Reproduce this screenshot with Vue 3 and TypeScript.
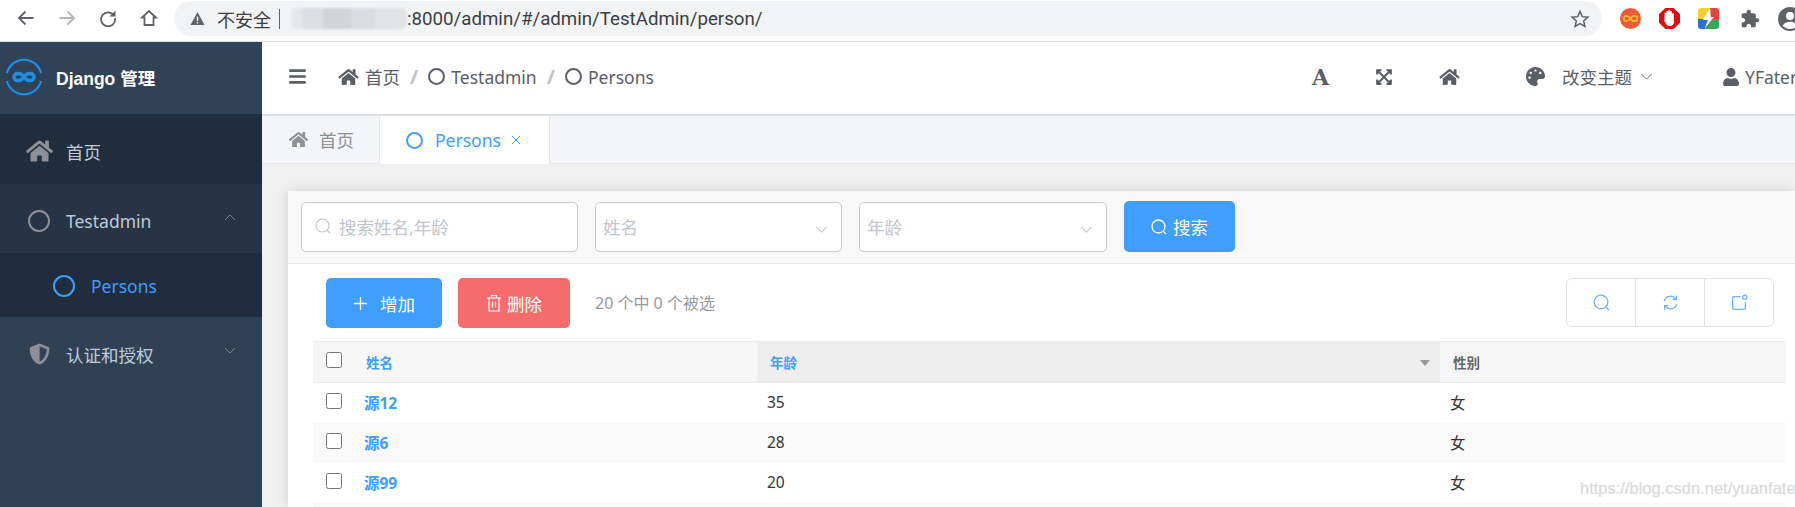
<template>
  <div class="window">
    <!-- browser toolbar -->
    <div class="chrome">
      <svg class="nav-ic" style="margin-left: 17px" viewBox="0 0 18 18"><path d="M16.5 9H2M8.5 2.5L2 9l6.5 6.5" /></svg>
      <svg class="nav-ic dim" viewBox="0 0 18 18"><path d="M1.5 9H16M9.5 2.5L16 9l-6.5 6.5" /></svg>
      <svg class="nav-ic" viewBox="0 0 18 18"><path d="M15 6.5A7 7 0 1 0 16 9" /><path class="solid" d="M16.5 1.5v6h-6z" /></svg>
      <svg class="nav-ic" viewBox="0 0 18 18"><path d="M9 2L2 8.5h2.500V16h9V8.500H16z" /></svg>
      <div class="omnibox">
        <svg class="warn" viewBox="0 0 16 16"><path d="M8 1l7.500 14H.5z" /><rect x="7.200" y="6" width="1.600" height="4.600" fill="#f1f3f4" /><rect x="7.200" y="11.600" width="1.600" height="1.600" fill="#f1f3f4" /></svg>
        <span class="insecure">不安全</span>
        <i class="omni-sep"></i>
        <i class="blurred"></i>
        <span class="url">:8000/admin/#/admin/TestAdmin/person/</span>
        <svg class="star" viewBox="0 0 24 24"><path d="M12 3l2.700 6.200 6.800.6-5.100 4.500 1.500 6.600L12 17.400l-5.900 3.500 1.500-6.600-5.100-4.500 6.800-.6z" /></svg>
      </div>
      <div class="extensions">
        <svg class="ext" viewBox="0 0 20 20"><circle cx="10" cy="10" r="10" fill="#ee5a3a" /><path d="M10 10C8 6.500 3.500 7 3.500 10s4.500 3.500 6.500 0 6.500-3.500 6.500 0-4.500 3.500-6.500 0z" fill="none" stroke="#f9c02c" stroke-width="1.500" /></svg>
        <svg class="ext" viewBox="0 0 20 20"><path d="M6 0h8l6 6v8l-6 6H6l-6-6V6z" fill="#e40b10" /><path d="M5.200 10V5.200a.9.9 0 0 1 1.800 0V3.400a.9.9 0 0 1 1.800 0V2.800a.9.9 0 0 1 1.800 0v.6a.9.9 0 0 1 1.800 0V6a.9.9 0 0 1 1.800 0v7.500c0 2.200-1.600 3.700-3.800 3.700-2.600 0-3.800-1.700-5.800-5.800.6-.9 1.500-.8 1.800-.2z" fill="#fff" /></svg>
        <svg class="ext" viewBox="0 0 21 21">
          <path d="M3 0h9L5 11H0V3a3 3 0 0 1 3-3z" fill="#f7cf2a" />
          <path d="M12 0h6a3 3 0 0 1 3 3v8H13z" fill="#e2453c" />
          <path d="M0 11h10l-3 10H3a3 3 0 0 1-3-3z" fill="#2a70d6" />
          <path d="M10 11h11v7a3 3 0 0 1-3 3H7z" fill="#3aa757" />
          <path d="M13 1L5 12h5l-3 8 9-11h-5z" fill="#fff" />
        </svg>
        <svg class="puzzle" viewBox="0 0 24 24"><path d="M20.500 11H19V7c0-1.100-.9-2-2-2h-4V3.500C13 2.120 11.880 1 10.500 1S8 2.120 8 3.500V5H4c-1.100 0-1.990.9-1.990 2v3.800H3.500c1.490 0 2.700 1.210 2.700 2.700s-1.210 2.700-2.700 2.700H2V20c0 1.100.9 2 2 2h3.800v-1.500c0-1.490 1.210-2.700 2.700-2.700 1.490 0 2.700 1.210 2.700 2.700V22H17c1.100 0 2-.9 2-2v-4h1.500c1.380 0 2.500-1.120 2.500-2.500S21.880 11 20.500 11z" /></svg>
        <svg class="avatar" viewBox="0 0 24 24"><circle cx="12" cy="12" r="12" fill="#5f6368" /><circle cx="12" cy="9" r="4" fill="#fff" /><path d="M4.500 18.500c2-3 5-3.800 7.500-3.800s5.500.8 7.500 3.800A10 10 0 0 1 12 22a10 10 0 0 1-7.500-3.500z" fill="#fff" /></svg>
      </div>
    </div>

    <div class="main">
      <aside class="sidebar">
        <div class="brand">
          <svg class="logo" viewBox="0 0 38 38">
            <path d="M2 15A17.500 17.500 0 0 1 36 15M36 23A17.500 17.500 0 0 1 2 23" fill="none" stroke="#1f8fe6" stroke-width="2" />
            <path d="M19 19c-2.500-4.500-10-5-10 0s7.500 4.500 10 0 10-5 10 0-7.500 4.500-10 0z" fill="none" stroke="#1f8fe6" stroke-width="3.500" />
          </svg>
          <span class="brand-name">Django 管理</span>
        </div>
        <div class="menu-item home">
          <svg class="fa menu-home" viewBox="0 0 576 512"><path :d="ICON_HOME" /></svg>
          <span>首页</span>
        </div>
        <div class="menu-item open">
          <i class="ring menu-ring"></i>
          <span>Testadmin</span>
          <svg class="caret" viewBox="0 0 12 7"><path d="M1 6l5-5 5 5" /></svg>
        </div>
        <div class="menu-item sub">
          <i class="ring sub-ring"></i>
          <span>Persons</span>
        </div>
        <div class="menu-item auth">
          <svg class="fa menu-shield" viewBox="0 0 512 512"><path :d="ICON_SHIELD" /><path d="M256 65v381C160 400 82 290 80 139z" opacity=".55" /></svg>
          <span>认证和授权</span>
          <svg class="caret" viewBox="0 0 12 7"><path d="M1 1l5 5 5-5" /></svg>
        </div>
      </aside>

      <div class="right">
        <header class="navbar">
          <svg class="fa bars" viewBox="0 0 448 512"><path :d="ICON_BARS" /></svg>
          <svg class="fa crumb-home" viewBox="0 0 576 512"><path :d="ICON_HOME" /></svg>
          <span class="crumb">首页</span>
          <span class="slash">/</span>
          <i class="ring crumb-ring"></i>
          <span class="crumb">Testadmin</span>
          <span class="slash">/</span>
          <i class="ring crumb-ring"></i>
          <span class="crumb">Persons</span>

          <div class="nav-tools">
            <span class="font-a">A</span>
            <svg class="fa tool-expand" viewBox="0 0 448 512"><path :d="ICON_EXPAND" /></svg>
            <svg class="fa tool-home" viewBox="0 0 576 512"><path :d="ICON_HOME" /></svg>
            <svg class="fa tool-palette" viewBox="0 0 512 512"><path :d="ICON_PALETTE" /></svg>
            <span class="theme">改变主题</span>
            <svg class="theme-caret" viewBox="0 0 14 8"><path d="M1 1l6 6 6-6" /></svg>
            <svg class="fa tool-user" viewBox="0 0 448 512"><path :d="ICON_USER" /></svg>
            <span class="user">YFater</span>
          </div>
        </header>

        <div class="tabs">
          <div class="tab">
            <svg class="fa tab-home" viewBox="0 0 576 512"><path :d="ICON_HOME" /></svg>
            <span>首页</span>
          </div>
          <div class="tab active">
            <i class="ring tab-ring"></i>
            <span>Persons</span>
            <svg class="tab-x" viewBox="0 0 10 10"><path d="M1 1l8 8M9 1l-8 8" /></svg>
          </div>
        </div>

        <div class="content">
          <section class="card">
            <div class="filters">
              <div class="field search">
                <svg class="search-ic" viewBox="0 0 16 16"><circle cx="7.500" cy="7.500" r="6.500" /><path d="M12 12l3 3" /></svg>
                <span>搜索姓名,年龄</span>
              </div>
              <div class="field select first">
                <span>姓名</span>
                <svg class="select-caret" viewBox="0 0 14 8"><path d="M1 1l6 6 6-6" /></svg>
              </div>
              <div class="field select second">
                <span>年龄</span>
                <svg class="select-caret" viewBox="0 0 14 8"><path d="M1 1l6 6 6-6" /></svg>
              </div>
              <button class="btn search-btn">
                <svg class="btn-search-ic" viewBox="0 0 16 16"><circle cx="7.500" cy="7.500" r="6.500" /><path d="M12 12l3 3" /></svg>
                搜索
              </button>
            </div>

            <div class="actions">
              <button class="btn add-btn">
                <svg class="plus" viewBox="0 0 16 16"><path d="M8 1v14M1 8h14" /></svg>
                增加
              </button>
              <button class="btn del-btn">
                <svg class="trash" viewBox="0 0 16 18"><path d="M1 4h14M5.500 4V1.500h5V4M3 4v13h10V4M6.500 7.500v6M9.500 7.500v6" /></svg>
                删除
              </button>
              <span class="selected">20 个中 0 个被选</span>
              <div class="btn-group">
                <button>
                  <svg viewBox="0 0 16 16"><circle cx="7.500" cy="7.500" r="6.500" /><path d="M12 12l3 3" /></svg>
                </button>
                <button>
                  <svg viewBox="0 0 16 16"><path d="M2 6.500A6.300 6.300 0 0 1 13 4.500M14 9.500A6.300 6.300 0 0 1 3 11.500" /><path d="M13.500 1.500v3.500H10M2.500 14.500V11H6" /></svg>
                </button>
                <button>
                  <svg viewBox="0 0 16 16"><path d="M9 2.500H3a1.500 1.500 0 0 0-1.500 1.500v9A1.500 1.500 0 0 0 3 14.500h9a1.500 1.500 0 0 0 1.500-1.500V7.500" /><circle cx="13" cy="3" r="2" /></svg>
                </button>
              </div>
            </div>

            <div class="table">
              <div class="thead row">
                <div class="cell-check"><i class="checkbox"></i></div>
                <div class="th name-head">姓名</div>
                <div class="th age-head">
                  年龄
                  <i class="sort"></i>
                </div>
                <div class="th sex-head">性别</div>
              </div>
              <div v-for="p in people" :key="p.name" class="row body-row">
                <div class="cell-check"><i class="checkbox"></i></div>
                <div class="td name">{{ p.name }}</div>
                <div class="td">{{ p.age }}</div>
                <div class="td">{{ p.sex }}</div>
              </div>
              <div class="row body-row"></div>
            </div>
          </section>
        </div>
      </div>
    </div>

    <span class="watermark">https://blog.csdn.net/yuanfate</span>
  </div>
</template>

<script setup lang="ts">
interface Person {
  name: string;
  age: number;
  sex: string;
}

const ICON_HOME =
  "M280.37 148.26L96 300.11V464a16 16 0 0 0 16 16l112.06-.29a16 16 0 0 0 15.92-16V368a16 16 0 0 1 16-16h64a16 16 0 0 1 16 16v95.64a16 16 0 0 0 16 16.05L464 480a16 16 0 0 0 16-16V300L295.67 148.26a12.19 12.19 0 0 0-15.3 0zM571.6 251.47L488 182.56V44.05a12 12 0 0 0-12-12h-56a12 12 0 0 0-12 12v72.61L318.47 43a48 48 0 0 0-61 0L4.34 251.47a12 12 0 0 0-1.6 16.9l25.5 31A12 12 0 0 0 45.15 301l235.22-193.74a12.19 12.19 0 0 1 15.3 0L530.9 301a12 12 0 0 0 16.9-1.6l25.5-31a12 12 0 0 0-1.7-16.93z";
const ICON_SHIELD =
  "M466.5 83.7l-192-80a48.15 48.15 0 0 0-36.9 0l-192 80C27.7 91.1 16 108.6 16 128c0 198.5 114.5 335.7 221.5 380.3 11.8 4.9 25.1 4.9 36.9 0C360.1 472.6 496 349.3 496 128c0-19.4-11.7-36.9-29.5-44.3zM256.1 446.3l-.1-381 175.9 73.3c-3.3 151.4-82.1 261.1-175.8 307.7z";
const ICON_BARS =
  "M16 132h416c8.837 0 16-7.163 16-16V76c0-8.837-7.163-16-16-16H16C7.163 60 0 67.163 0 76v40c0 8.837 7.163 16 16 16zm0 160h416c8.837 0 16-7.163 16-16v-40c0-8.837-7.163-16-16-16H16c-8.837 0-16 7.163-16 16v40c0 8.837 7.163 16 16 16zm0 160h416c8.837 0 16-7.163 16-16v-40c0-8.837-7.163-16-16-16H16c-8.837 0-16 7.163-16 16v40c0 8.837 7.163 16 16 16z";
const ICON_EXPAND =
  "M448 344v112a23.94 23.94 0 0 1-24 24H312c-21.39 0-32.09-25.9-17-41l36.2-36.2L224 295.6 116.77 402.9 153 439c15.09 15.1 4.39 41-17 41H24a23.94 23.94 0 0 1-24-24V344c0-21.4 25.89-32.1 41-17l36.19 36.2L184.46 256 77.18 148.7 41 185c-15.1 15.1-41 4.4-41-17V56a23.94 23.94 0 0 1 24-24h112c21.39 0 32.09 25.9 17 41l-36.2 36.2L224 216.4l107.23-107.3L295 73c-15.09-15.1-4.39-41 17-41h112a23.94 23.94 0 0 1 24 24v112c0 21.4-25.89 32.1-41 17l-36.19-36.2L263.54 256l107.28 107.3L407 327.1c15.1-15.2 41-4.5 41 16.9z";
const ICON_PALETTE =
  "M204.3 5C104.9 24.4 24.8 104.3 5.2 203.4c-37 187 131.7 326.4 258.8 306.7 41.2-6.4 61.4-54.6 42.5-91.7-23.1-45.4 9.9-98.4 60.9-98.4h79.7c35.8 0 64.8-29.6 64.9-65.3C511.5 97.1 368.1-26.9 204.3 5zM96 320c-17.7 0-32-14.3-32-32s14.3-32 32-32 32 14.3 32 32-14.3 32-32 32zm32-128c-17.7 0-32-14.3-32-32s14.3-32 32-32 32 14.3 32 32-14.3 32-32 32zm128-64c-17.7 0-32-14.3-32-32s14.3-32 32-32 32 14.3 32 32-14.3 32-32 32zm128 64c-17.7 0-32-14.3-32-32s14.3-32 32-32 32 14.3 32 32-14.3 32-32 32z";
const ICON_USER =
  "M224 256c70.7 0 128-57.3 128-128S294.7 0 224 0 96 57.3 96 128s57.3 128 128 128zm89.6 32h-16.7c-22.2 10.2-46.9 16-72.9 16s-50.6-5.8-72.9-16h-16.7C60.2 288 0 348.2 0 422.4V464c0 26.5 21.5 48 48 48h352c26.5 0 48-21.5 48-48v-41.6c0-74.2-60.2-134.4-134.4-134.4z";

const people: Person[] = [
  { name: "源12", age: 35, sex: "女" },
  { name: "源6", age: 28, sex: "女" },
  { name: "源99", age: 20, sex: "女" },
];
</script>

<style>
html,
body {
  margin: 0;
  overflow: hidden;
}
</style>

<style scoped>
.window {
  position: relative;
  width: 1795px;
  height: 507px;
  overflow: hidden;
  display: flex;
  flex-direction: column;
  background: #fff;
  font-family: "Noto Sans", "Noto Sans CJK SC", sans-serif;
  color: #5a5e66;
}

i {
  display: block;
  font-style: normal;
}

/* browser toolbar */
.chrome {
  height: 41px;
  flex: none;
  display: flex;
  align-items: flex-start;
  border-bottom: 1px solid #dcdcdc;
  box-sizing: content-box;
}

.nav-ic {
  width: 18px;
  height: 18px;
  margin-top: 9px;
  margin-right: 23px;
  fill: none;
  stroke: #5f6368;
  stroke-width: 1.8;
}

.nav-ic.dim {
  stroke: #b4b6b9;
}

.nav-ic .solid {
  fill: #5f6368;
  stroke: none;
}

.omnibox {
  margin-left: -7px;
  margin-top: 1px;
  flex: 1 0 auto;
  height: 35px;
  border-radius: 18px;
  background: #f1f3f4;
  display: flex;
  align-items: center;
  padding-left: 16px;
  font-family: "Roboto", "Noto Sans CJK SC", sans-serif;
  font-size: 18px;
  color: #3c4043;
}

.warn {
  width: 15px;
  height: 15px;
  fill: #5f6368;
  margin-right: 12px;
}

.omni-sep {
  width: 1px;
  height: 20px;
  background: #5f6368;
  margin: 0 11px 0 8px;
}

.blurred {
  width: 116px;
  height: 21px;
  border-radius: 6px;
  background: linear-gradient(90deg, #e6e7e9 0 10%, #dcdedf 10% 28%, #d2d4d6 28% 52%, #dbdcde 52% 72%, #e2e3e5 72%);
  filter: blur(1px);
}

.url {
  white-space: nowrap;
  font-size: 18.7px;
}

.star {
  width: 20px;
  height: 20px;
  margin-left: auto;
  margin-right: 12px;
  fill: none;
  stroke: #5f6368;
  stroke-width: 1.8;
}

.extensions {
  width: 193px;
  flex: none;
  display: flex;
  align-items: flex-start;
}

.ext {
  width: 21px;
  height: 21px;
  margin-top: 8px;
  margin-left: 18px;
  flex: none;
}

.puzzle {
  width: 20px;
  height: 20px;
  margin-top: 9px;
  margin-left: 21px;
  fill: #5f6368;
  flex: none;
}

.avatar {
  width: 24px;
  height: 24px;
  margin-top: 7px;
  margin-left: 18px;
  flex: none;
}

.main {
  flex: 1;
  min-height: 0;
  display: flex;
}

/* sidebar */
.sidebar {
  width: 262px;
  flex: none;
  background: #304156;
  color: #bfcbd9;
  font-size: 17.5px;
}

.brand {
  height: 72px;
  display: flex;
  align-items: center;
  padding: 0 0 2px 5px;
  box-sizing: border-box;
  background: #304258;
}

.logo {
  width: 38px;
  height: 38px;
  margin-right: 13px;
}

.brand-name {
  color: #fff;
  font-family: "Liberation Sans", "Noto Sans CJK SC", sans-serif;
  font-size: 17.5px;
  font-weight: 700;
}

.menu-item {
  display: flex;
  align-items: center;
  box-sizing: border-box;
  position: relative;
}

.menu-item.home {
  height: 70px;
  padding: 4px 0 0 26px;
  background: #1f2d3d;
}

.menu-item.open {
  height: 69px;
  padding: 4px 0 0 28px;
  background: #263445;
}

.menu-item.sub {
  height: 64px;
  padding: 2px 0 0 53px;
  background: #1f2d3d;
  color: #409eff;
}

.menu-item.auth {
  height: 68px;
  padding: 6px 0 0 29px;
}

.menu-item .fa {
  fill: #8d9095;
}

.menu-home {
  width: 27px;
  height: 24px;
  margin-right: 13px;
}

.menu-shield {
  width: 21px;
  height: 24px;
  margin-right: 16px;
}

.ring {
  box-sizing: border-box;
  border-radius: 50%;
  border: 2px solid #5a5e66;
  flex: none;
}

.menu-ring {
  width: 22px;
  height: 22px;
  margin-right: 16px;
  border-color: #8d9095;
}

.sub-ring {
  width: 22px;
  height: 22px;
  margin-right: 16px;
  border-color: #409eff;
}

.caret {
  position: absolute;
  left: 224px;
  top: 30px;
  width: 12px;
  height: 7px;
  fill: none;
  stroke: #79818c;
  stroke-width: 1;
}

/* top bar */
.right {
  flex: 1;
  min-width: 0;
  display: flex;
  flex-direction: column;
}

.navbar {
  height: 74px;
  flex: none;
  display: flex;
  align-items: center;
  padding: 0 0 3px 27px;
  border-bottom: 2px solid #dcdfe6;
  box-sizing: border-box;
  font-size: 17.5px;
}

.fa {
  flex: none;
  fill: #5a5e66;
}

.bars {
  width: 17px;
  height: 19px;
  margin-right: 32px;
}

.crumb-home {
  width: 21px;
  height: 18px;
  margin-right: 6px;
}

.crumb {
  white-space: nowrap;
}

.slash {
  margin: 0 10px;
  color: #c0c4cc;
  font-weight: 700;
  font-size: 20px;
}

.crumb-ring {
  width: 17px;
  height: 17px;
  margin-right: 6px;
}

.nav-tools {
  margin-left: auto;
  display: flex;
  align-items: center;
}

.font-a {
  font-family: "DejaVu Serif", serif;
  font-weight: 700;
  font-size: 22px;
  width: 49px;
  margin-right: 15px;
}

.tool-expand {
  width: 16px;
  height: 18px;
  margin-right: 47px;
}

.tool-home {
  width: 21px;
  height: 18px;
  margin-right: 66px;
}

.tool-palette {
  width: 19px;
  height: 19px;
  margin-right: 17px;
}

.theme {
  white-space: nowrap;
}

.theme-caret {
  width: 13px;
  height: 7px;
  margin: 0 70px 0 8px;
  fill: none;
  stroke: #5a5e66;
  stroke-width: 1;
}

.tool-user {
  width: 16px;
  height: 18px;
  margin-right: 6px;
}

.user {
  width: 50px;
}

/* tabs */
.tabs {
  height: 48px;
  flex: none;
  display: flex;
  background: #f4f5f9;
  border-bottom: 1px solid #e6e8ee;
  box-sizing: border-box;
  font-size: 17.5px;
}

.tab {
  display: flex;
  align-items: center;
  color: #8d9095;
  box-sizing: border-box;
  width: 118px;
  padding-left: 26px;
  border-right: 1px solid #dfe4ed;
}

.tab .fa {
  fill: #8d9095;
}

.tab-home {
  width: 21px;
  height: 17px;
  margin-right: 10px;
}

.tab.active {
  width: 170px;
  padding-left: 26px;
  margin-bottom: -1px;
  background: #fff;
  color: #409eff;
}

.tab-ring {
  width: 17px;
  height: 17px;
  margin-right: 12px;
  border-color: #409eff;
}

.tab-x {
  width: 10px;
  height: 10px;
  margin-left: 10px;
  fill: none;
  stroke: #409eff;
  stroke-width: 1;
}

/* page */
.content {
  flex: 1;
  min-height: 0;
  background: #f0f0f0;
  padding: 27px 0 0 26px;
}

.card {
  background: #fff;
  height: 100%;
  box-shadow: 0 0 12px rgba(0, 0, 0, 0.12);
}

.filters {
  height: 73px;
  box-sizing: border-box;
  background: #f8f8f8;
  border-bottom: 1px solid #ebebeb;
  display: flex;
  align-items: flex-start;
  padding: 11px 0 0 13px;
}

.field {
  height: 50px;
  box-sizing: border-box;
  display: flex;
  align-items: center;
  padding-bottom: 2px;
  background: #fff;
  border: 1px solid #c9cbcf;
  border-radius: 5px;
  color: #c0c4cc;
  font-size: 17.5px;
  position: relative;
}

.search {
  width: 277px;
  padding-left: 13px;
  margin-right: 17px;
}

.search-ic {
  width: 16px;
  height: 16px;
  margin-right: 8px;
  fill: none;
  stroke: #c0c4cc;
  stroke-width: 1.2;
}

.select {
  padding-left: 7px;
}

.select.first {
  width: 247px;
  margin-right: 17px;
}

.select.second {
  width: 248px;
  margin-right: 17px;
}

.select-caret {
  position: absolute;
  right: 13px;
  top: 23px;
  width: 13px;
  height: 7px;
  fill: none;
  stroke: #c0c4cc;
  stroke-width: 1.2;
}

.btn {
  border: none;
  border-radius: 5px;
  color: #fff;
  font: inherit;
  font-size: 17.5px;
  display: flex;
  align-items: center;
  justify-content: center;
  padding: 0;
}

.search-btn {
  width: 111px;
  height: 51px;
  margin-top: -1px;
  background: #409eff;
}

.btn-search-ic {
  width: 16px;
  height: 16px;
  margin-right: 6px;
  fill: none;
  stroke: #fff;
  stroke-width: 1.3;
}

.actions {
  height: 77px;
  display: flex;
  align-items: flex-start;
  padding: 14px 0 0 38px;
  box-sizing: border-box;
}

.add-btn {
  width: 116px;
  height: 50px;
  background: #409eff;
  margin-right: 16px;
}

.plus {
  width: 15px;
  height: 15px;
  margin-right: 12px;
  fill: none;
  stroke: #fff;
  stroke-width: 1.4;
}

.del-btn {
  width: 112px;
  height: 50px;
  background: #f56c6c;
  margin-right: 25px;
}

.trash {
  width: 16px;
  height: 18px;
  margin-right: 5px;
  fill: none;
  stroke: #fff;
  stroke-width: 1.2;
}

.selected {
  line-height: 50px;
  font-size: 16px;
  color: #9a9a9a;
}

.btn-group {
  margin-left: auto;
  margin-right: 21px;
  display: flex;
  width: 208px;
  height: 49px;
  border: 1px solid #dcdfe6;
  border-radius: 6px;
  box-sizing: border-box;
}

.btn-group button {
  flex: 1;
  background: none;
  border: none;
  border-right: 1px solid #dcdfe6;
  padding: 0;
  display: flex;
  align-items: center;
  justify-content: center;
}

.btn-group button:last-child {
  border-right: none;
}

.btn-group svg {
  width: 17px;
  height: 17px;
  fill: none;
  stroke: #66b1ff;
  stroke-width: 1.2;
}

/* table */
.table {
  margin: 0 9px 0 25px;
}

.row {
  display: grid;
  grid-template-columns: 44px 400px 683px 346px;
  height: 40px;
  align-items: center;
}

.body-row:nth-child(odd) {
  background: #fafafa;
}

.thead {
  height: 42px;
  background: #f6f6f6;
  border-top: 1px solid #ebebeb;
  border-bottom: 1px solid #ebebeb;
  box-sizing: border-box;
  align-items: stretch;
}

.cell-check {
  display: flex;
  align-items: center;
  padding: 0 0 4px 13px;
}

.checkbox {
  width: 16px;
  height: 16px;
  box-sizing: border-box;
  border: 1px solid #767676;
  border-radius: 2.5px;
  background: #fff;
}

.th {
  display: flex;
  align-items: center;
  font-size: 13.5px;
  font-weight: 700;
  color: #666;
  padding-left: 13px;
}

.name-head {
  padding-left: 9px;
  color: #409eff;
}

.age-head {
  color: #409eff;
  background: #eee;
  position: relative;
}

.sort {
  position: absolute;
  right: 10px;
  top: 18px;
  border: 5px solid transparent;
  border-top: 6px solid #999;
  border-bottom: none;
}

.td {
  font-size: 15.5px;
  color: #333;
  padding: 0 0 2px 10px;
}

.td.name {
  padding-left: 7px;
  color: #409eff;
  font-weight: 700;
}

.watermark {
  position: absolute;
  left: 1580px;
  top: 479px;
  font-family: "Liberation Sans", sans-serif;
  font-size: 16.5px;
  color: #dcdcdc;
  text-shadow: 0 0 1px #e4e4e4;
  white-space: nowrap;
}
</style>
